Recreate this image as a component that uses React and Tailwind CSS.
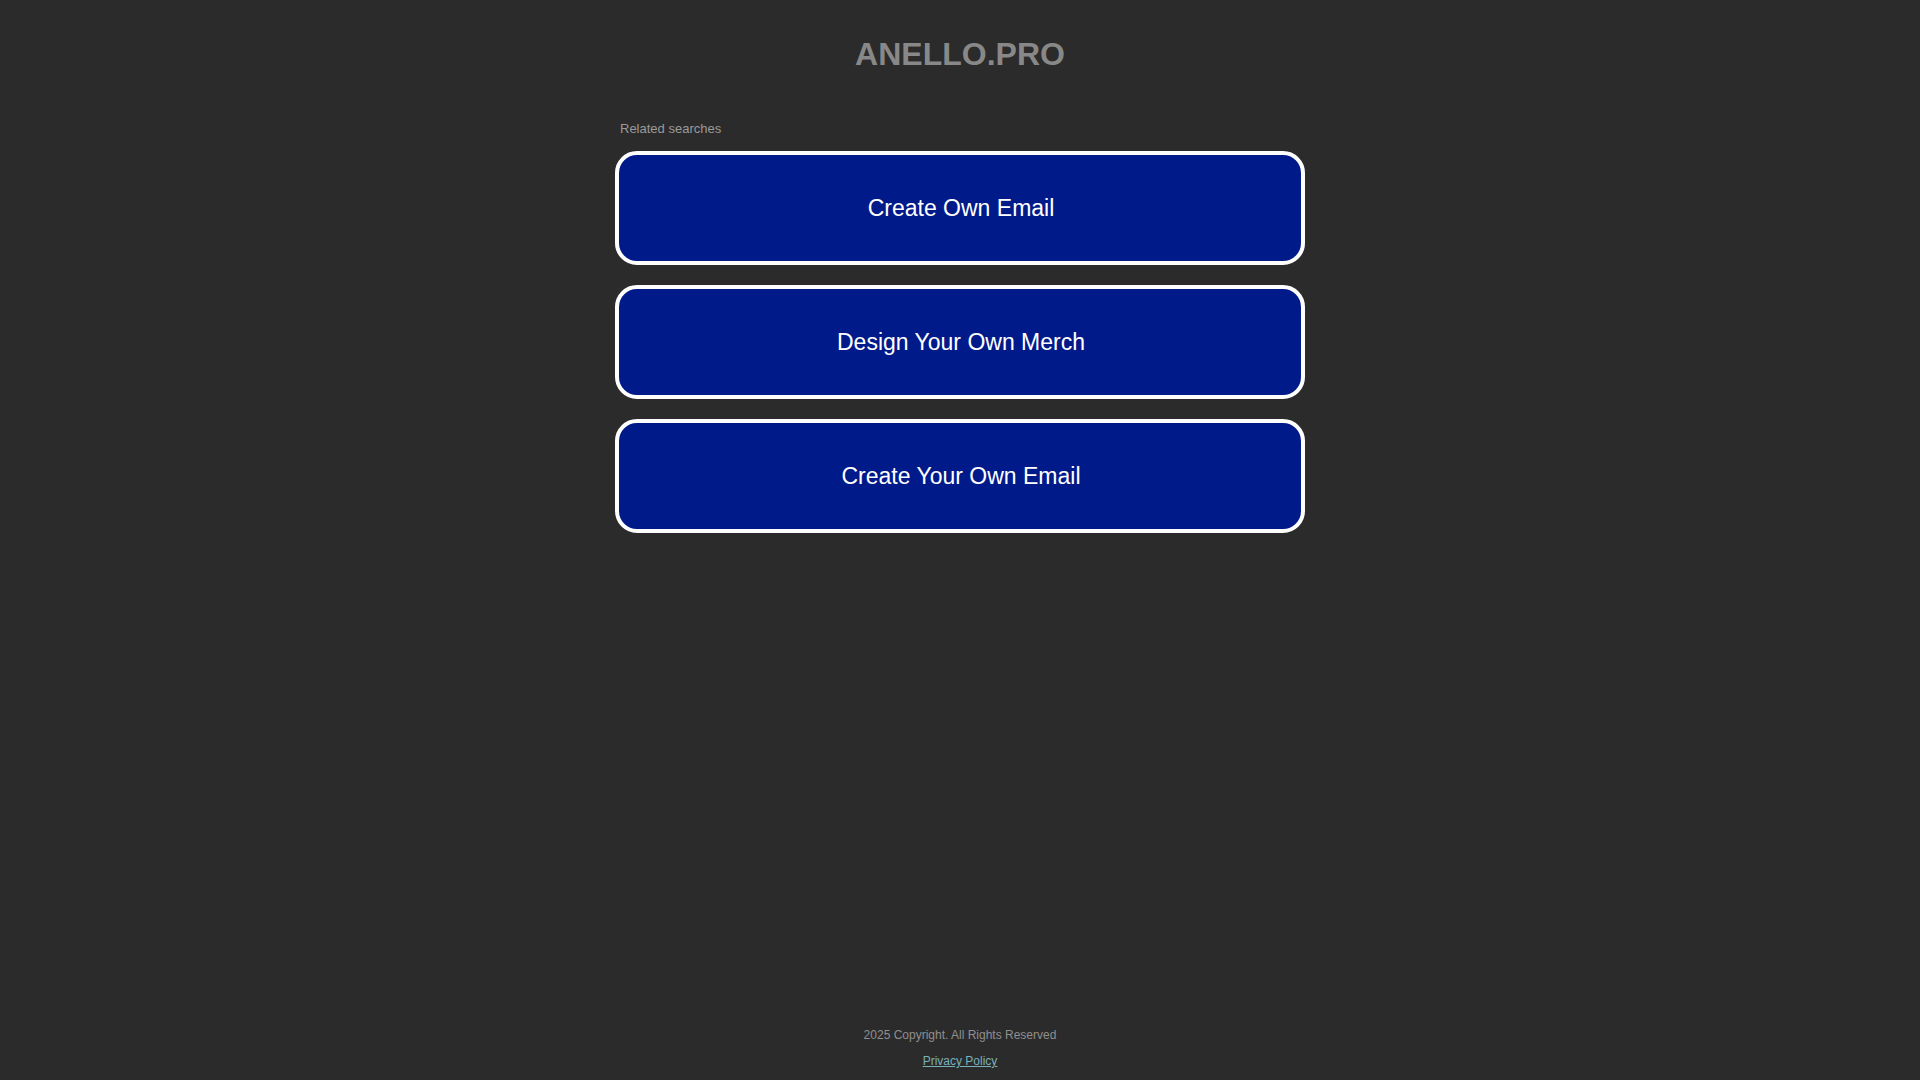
export default function App() {
  const items = ["Create Own Email", "Design Your Own Merch", "Create Your Own Email"];
  return (
    <div className="min-h-screen bg-[#2b2b2b] flex flex-col" style={{ fontFamily: '"Liberation Sans", Arial, sans-serif' }}>
      <div className="w-[690px] mx-auto flex-1">
        <h1 className="text-center text-[32px] leading-[37px] font-bold text-[#888888] pt-[36px]">ANELLO.PRO</h1>
        <div className="text-[13px] leading-[15px] text-[#9a9a9a] pl-[5px] mt-[48px]">Related searches</div>
        <div className="mt-[15px] flex flex-col gap-[20px]">
          {items.map((t) => (
            <a key={t} href="#" className="h-[114px] flex items-center justify-center pl-[2px] bg-[#011a8a] border-[4px] border-white rounded-[22px] text-white text-[23px]">
              {t}
            </a>
          ))}
        </div>
      </div>
      <div className="text-center pb-[8px]">
        <div className="text-[12px] leading-[14px] text-[#8f8f8f]">2025 Copyright. All Rights Reserved</div>
        <a href="#" className="inline-block mt-[12px] text-[12px] leading-[14px] text-[#79b1ba] underline">Privacy Policy</a>
      </div>
    </div>
  );
}
